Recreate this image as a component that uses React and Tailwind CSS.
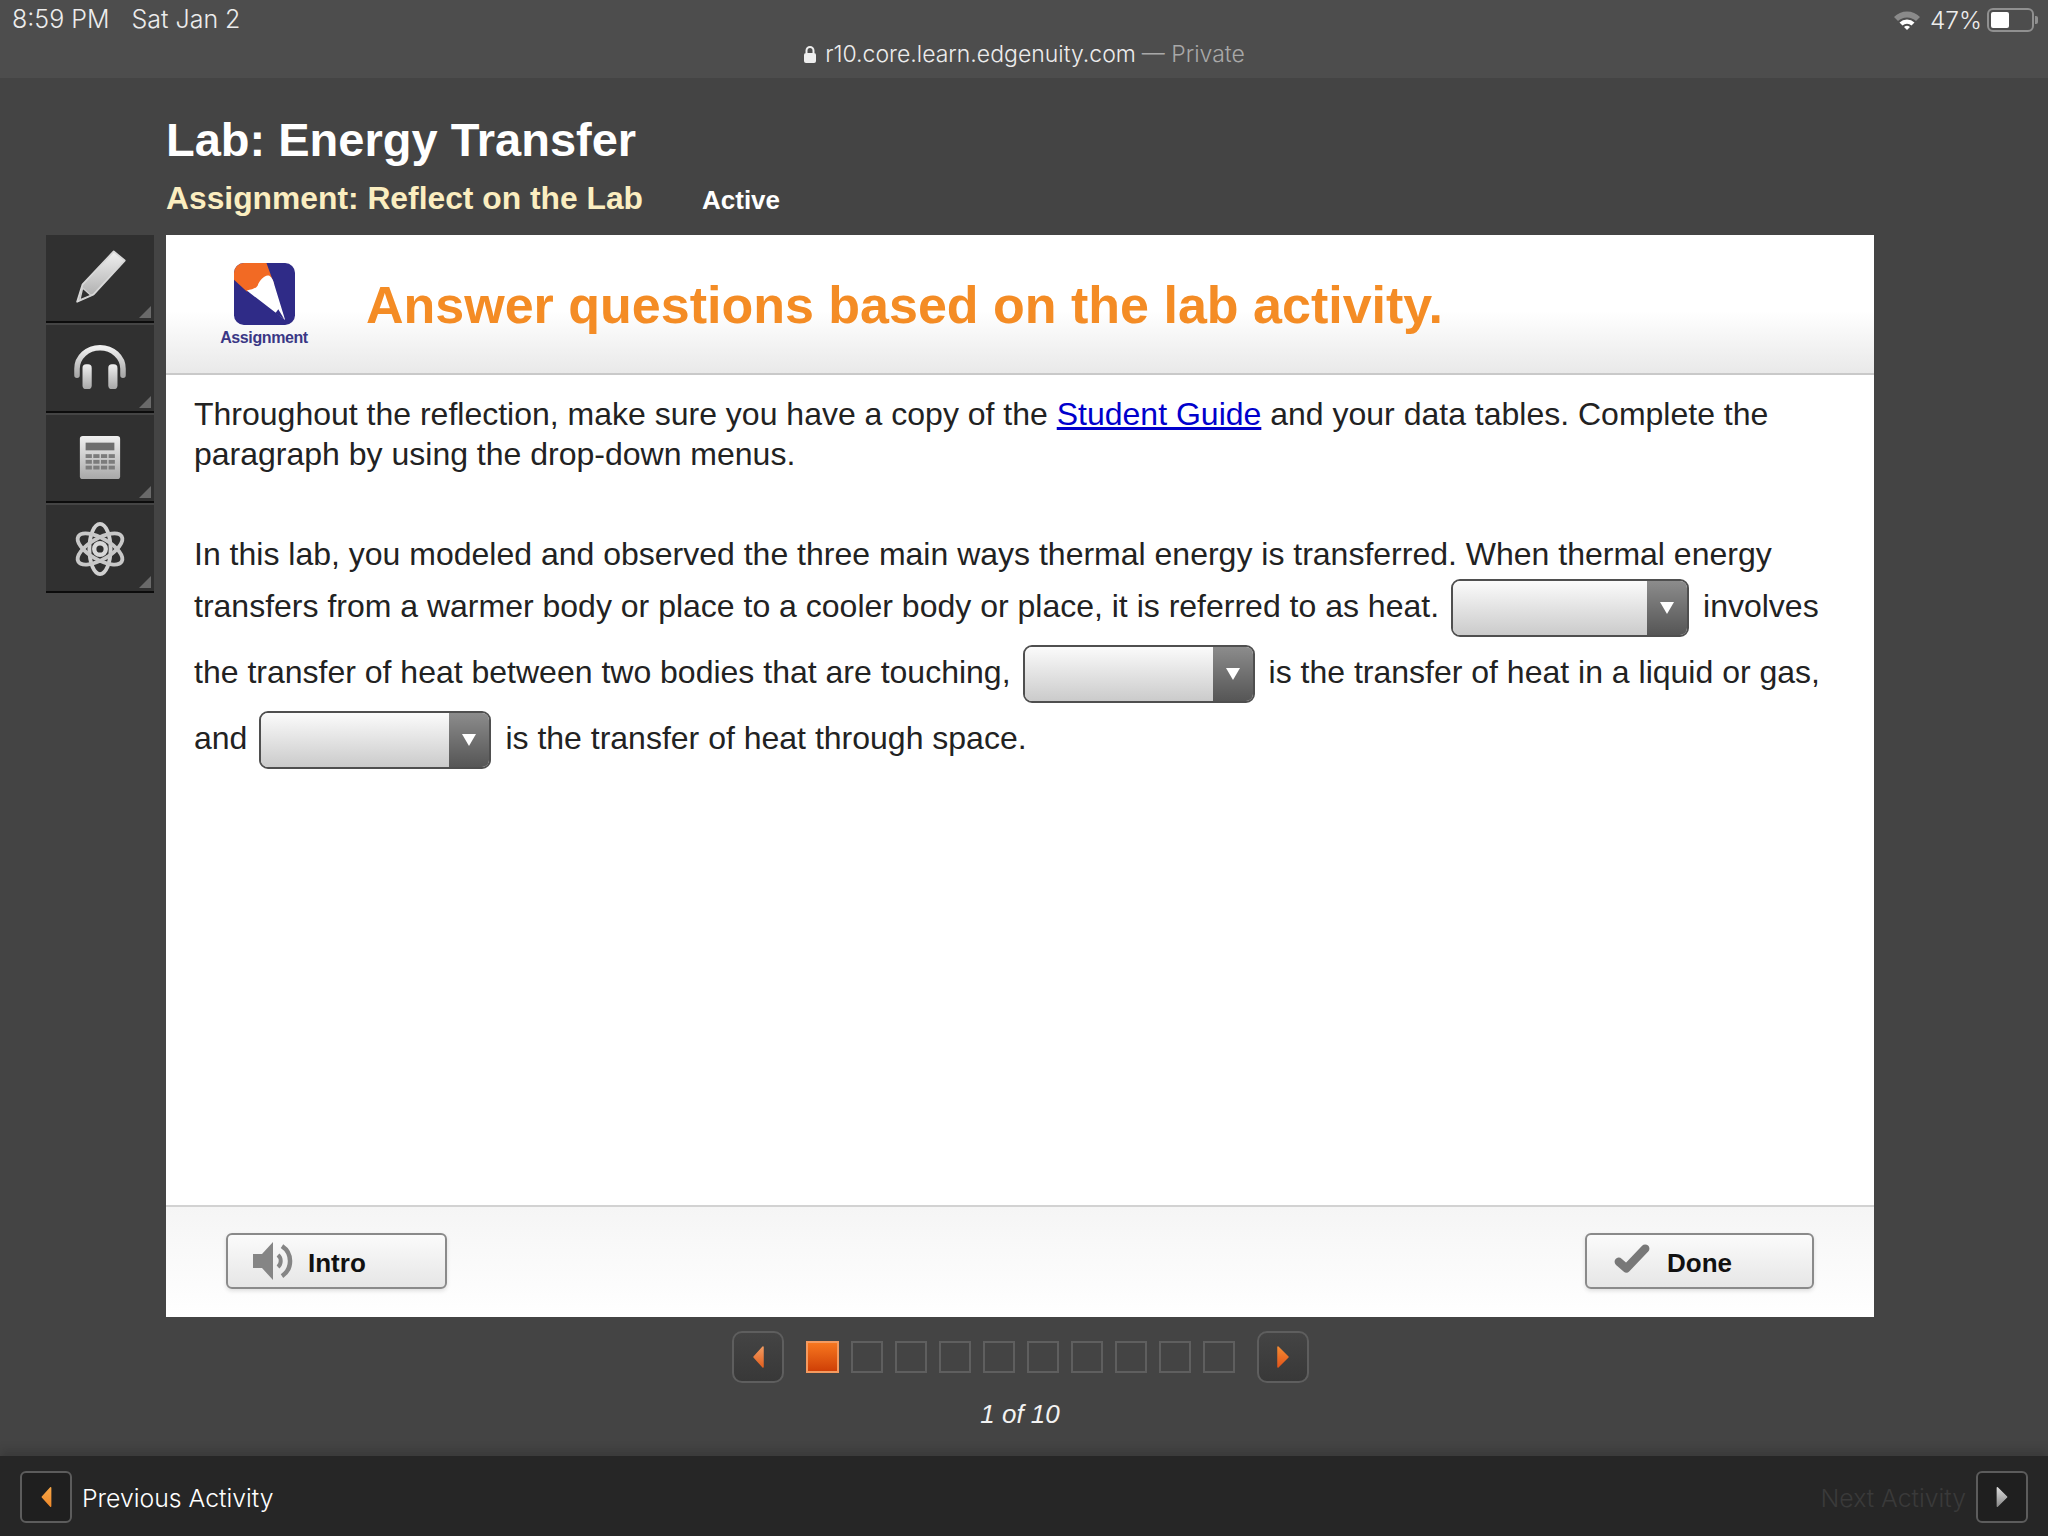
const grad = "bg-gradient-to-b from-[#fbfbfb] to-[#e6e6e6]";

function Tri({ dir = "left", id, from, to, size = 30 }) {
  const pts = dir === "left" ? "20,5 20,25 11,15" : "10,5 10,25 20,15";
  return (
    <svg width={size} height={size} viewBox="0 0 30 30">
      <defs>
        <linearGradient id={id} x1="0" y1="0" x2="0" y2="1">
          <stop offset="0" stopColor={from} />
          <stop offset="1" stopColor={to} />
        </linearGradient>
      </defs>
      <polygon points={pts} fill={`url(#${id})`} stroke={`url(#${id})`} strokeWidth="1.5" strokeLinejoin="round" />
    </svg>
  );
}

function IconGrad({ id }) {
  return (
    <defs>
      <linearGradient id={id} x1="0" y1="0" x2="0" y2="1">
        <stop offset="0" stopColor="#f0f0f0" />
        <stop offset="1" stopColor="#a8a8a8" />
      </linearGradient>
    </defs>
  );
}

function Tool({ children }) {
  return (
    <div className="relative h-[88px] mb-[2px] w-[108px] flex items-center justify-center bg-[#303030] border-b-[2px] border-b-[#0c0c0c] pb-[2px]">
      {children}
      <div className="absolute right-[3px] bottom-[3px] w-0 h-0 border-l-[12px] border-l-transparent border-b-[12px] border-b-[#6a6a6a]" />
    </div>
  );
}

function Select({ w }) {
  return (
    <span className={`inline-flex align-middle h-[58px] ${w} ml-[12px] mr-[14px] rounded-[9px] border-[2px] border-[#4f4f4f] overflow-hidden relative top-[-1px]`}>
      <span className="flex-1 bg-gradient-to-b from-[#fbfbfb] to-[#cbcbcb]" />
      <span className="w-[40px] flex items-center justify-center bg-gradient-to-b from-[#8c8c8c] to-[#565656]">
        <span className="w-0 h-0 border-l-[7px] border-r-[7px] border-t-[12px] border-l-transparent border-r-transparent border-t-white" />
      </span>
    </span>
  );
}

function Btn({ w, label, icon, gap }) {
  return (
    <div className={`${w} h-[56px] rounded-[6px] border-[2px] border-[#8a8a8a] ${grad} shadow-[0_2px_4px_rgba(0,0,0,0.12)] flex items-center pl-[22px]`}>
      <div className="w-[46px] flex items-center justify-center">{icon}</div>
      <span className={`${gap} mt-[5px] font-['Liberation_Sans',sans-serif] font-bold text-[26px] text-[#111]`}>{label}</span>
    </div>
  );
}

export default function App() {
  return (
    <div className="w-[2048px] h-[1536px] overflow-hidden flex flex-col bg-[#444444] font-['Liberation_Sans',sans-serif]">
      {/* status bar */}
      <div className="relative h-[78px] shrink-0 bg-[#4d4d4d] font-['Inter',sans-serif] text-[#ececec]">
        <div className="flex items-center justify-between h-[40px] pl-[12px] pr-[10px] text-[25px] font-light">
          <div className="flex gap-[22px]">
            <span>8:59 PM</span>
            <span>Sat Jan 2</span>
          </div>
          <div className="flex items-center">
            <svg width="28" height="22" viewBox="0 0 28 22" className="mr-[9px]">
              <path d="M1 8 A18 18 0 0 1 27 8 L23 12 A13 13 0 0 0 5 12 Z" fill="#8a8a8a" />
              <path d="M6.5 13.5 A11 11 0 0 1 21.5 13.5 L18.5 16.5 A7 7 0 0 0 9.5 16.5 Z" fill="#fff" />
              <path d="M11 18 A4.5 4.5 0 0 1 17 18 L14 21 Z" fill="#fff" />
            </svg>
            <span className="mr-[5px] text-[24.5px]">47%</span>
            <span className="w-[47px] h-[24px] rounded-[6px] border-[2px] border-[#909090] p-[2px] flex">
              <span className="w-[18px] h-full bg-white rounded-[2px]" />
            </span>
            <span className="w-[3px] h-[8px] ml-[1px] bg-[#909090] rounded-r-[2px]" />
          </div>
        </div>
        <div className="flex items-center justify-center h-[32px] text-[23px] font-light mt-[-2px]">
          <svg width="14" height="19" viewBox="0 0 14 19" className="mr-[8px]">
            <path d="M3.5 8 V5.5 a3.5 3.5 0 0 1 7 0 V8" fill="none" stroke="#eee" strokeWidth="2" />
            <rect x="1" y="8" width="12" height="10" rx="2" fill="#eee" />
          </svg>
          <span>r10.core.learn.edgenuity.com</span>
          <span className="text-[#a8a8a8] ml-[6px]">— Private</span>
        </div>
      </div>

      {/* headings */}
      <div className="pl-[166px] h-[157px] shrink-0">
        <h1 className="pt-[34px] text-[47px] leading-[56px] font-bold text-white">Lab: Energy Transfer</h1>
        <div className="flex items-baseline mt-[11px]">
          <span className="text-[31.8px] leading-[38px] font-bold text-[#fbeec0]">Assignment: Reflect on the Lab</span>
          <span className="ml-[59px] text-[26px] font-bold text-white">Active</span>
        </div>
      </div>

      {/* body */}
      <div className="flex pl-[46px] gap-[12px] items-start shrink-0">
        <div className="flex flex-col w-[108px]">
          <Tool>
            <svg width="64" height="64" viewBox="0 0 70 70">
              <IconGrad id="g1" />
              <path d="M50 7 L62 17 L28 54 L10 62 L16 43 Z" fill="url(#g1)" stroke="#d8d8d8" strokeWidth="2" strokeLinejoin="round" />
              <path d="M16 47 L25 55 L13 60 Z" fill="#303030" stroke="#d0d0d0" strokeWidth="1.5" />
            </svg>
          </Tool>
          <Tool>
            <svg width="60" height="46" viewBox="0 0 62 50">
              <IconGrad id="g2" />
              <path d="M6 34 V27 A25 23 0 0 1 56 27 V34" fill="none" stroke="url(#g2)" strokeWidth="6" strokeLinecap="round" />
              <rect x="12" y="22" width="10" height="27" rx="4" fill="url(#g2)" />
              <rect x="40" y="22" width="10" height="27" rx="4" fill="url(#g2)" />
            </svg>
          </Tool>
          <Tool>
            <svg width="44" height="46" viewBox="0 0 44 48" className="mt-[2px]">
              <IconGrad id="g3" />
              <rect x="1" y="1" width="42" height="45" rx="3" fill="url(#g3)" />
              <rect x="7" y="8" width="30" height="8" fill="#6e6e6e" />
              <g fill="#7c7c7c">
                <rect x="7" y="20" width="6.5" height="4" /><rect x="15" y="20" width="6.5" height="4" /><rect x="23" y="20" width="6.5" height="4" /><rect x="31" y="20" width="6.5" height="4" />
                <rect x="7" y="26" width="6.5" height="4" /><rect x="15" y="26" width="6.5" height="4" /><rect x="23" y="26" width="6.5" height="4" /><rect x="31" y="26" width="6.5" height="4" />
                <rect x="7" y="32" width="6.5" height="4" /><rect x="15" y="32" width="6.5" height="4" /><rect x="23" y="32" width="6.5" height="4" /><rect x="31" y="32" width="6.5" height="4" />
              </g>
            </svg>
          </Tool>
          <Tool>
            <svg width="54" height="58" viewBox="0 0 56 58" className="mt-[3px]">
              <g fill="none" strokeWidth="4">
                <ellipse cx="28" cy="29" rx="11" ry="26" stroke="#d0d0d0" />
                <ellipse cx="28" cy="29" rx="11" ry="26" transform="rotate(60 28 29)" stroke="#c8c8c8" />
                <ellipse cx="28" cy="29" rx="11" ry="26" transform="rotate(-60 28 29)" stroke="#c8c8c8" />
                <circle cx="28" cy="29" r="6" stroke="#d8d8d8" strokeWidth="4.5" />
              </g>
            </svg>
          </Tool>
        </div>

        <div className="w-[1708px] h-[1082px] bg-white flex flex-col">
          <div className="h-[140px] shrink-0 flex bg-gradient-to-b from-white from-[55%] to-[#e9e9e9] border-b-[2px] border-b-[#c9c9c9]">
            <div className="w-[196px] flex flex-col items-center pt-[28px]">
              <svg width="61" height="62" viewBox="0 0 62 63">
                <defs>
                  <clipPath id="lg"><rect x="0" y="0" width="62" height="63" rx="10" /></clipPath>
                </defs>
                <g clipPath="url(#lg)">
                  <rect width="62" height="63" fill="#2f2b87" />
                  <path d="M0 0 H33 L41 22 L28 24 L13 29 L0 17 Z" fill="#f26a24" />
                  <path d="M13 28 C18 27 22 26 24 23 C26 17 32 11 36 13 C39 15 40 18 41 22 L52 58 Z" fill="#fff" />
                  <path d="M45 47 L51 57 L42 51 Z" fill="#2f2b87" />
                </g>
              </svg>
              <span className="mt-[3px] text-[16px] leading-[20px] font-bold tracking-[-0.4px] text-[#3a3785]">Assignment</span>
            </div>
            <div className="ml-[4px] pt-[40px] text-[52px] leading-[60px] font-bold text-[#f48c25]">Answer questions based on the lab activity.</div>
          </div>

          <div className="flex-1 pl-[28px] text-[32px] text-[#222]">
            <p className="pt-[19px] leading-[40px]">
              Throughout the reflection, make sure you have a copy of the{" "}
              <span className="text-[#0000cc] underline">Student Guide</span> and your data tables. Complete the<br />
              paragraph by using the drop-down menus.
            </p>
            <div className="mt-[60px]">
              <div className="h-[40px] leading-[40px] whitespace-nowrap">In this lab, you modeled and observed the three main ways thermal energy is transferred. When thermal energy</div>
              <div className="h-[66px] leading-[66px] mt-[-1px] whitespace-nowrap">transfers from a warmer body or place to a cooler body or place, it is referred to as heat.<Select w="w-[238px]" />involves</div>
              <div className="h-[66px] leading-[66px] whitespace-nowrap">the transfer of heat between two bodies that are touching,<Select w="w-[232px]" />is the transfer of heat in a liquid or gas,</div>
              <div className="h-[66px] leading-[66px] whitespace-nowrap">and<Select w="w-[232px]" />is the transfer of heat through space.</div>
            </div>
          </div>

          <div className="h-[112px] shrink-0 border-t-[2px] border-t-[#d2d2d2] bg-gradient-to-b from-[#f5f5f5] to-white flex items-start justify-between px-[60px] pt-[26px]">
            <Btn
              w="w-[221px]"
              label="Intro"
              gap="ml-[12px]"
              icon={
                <svg width="44" height="44" viewBox="0 0 44 44">
                  <path d="M2 15 H11 L22 3 V41 L11 29 H2 Z" fill="#858585" />
                  <path d="M27 16 A8 8 0 0 1 27 28" fill="none" stroke="#858585" strokeWidth="4" />
                  <path d="M31 7 A18 18 0 0 1 31 37" fill="none" stroke="#858585" strokeWidth="4.5" />
                </svg>
              }
            />
            <Btn
              w="w-[229px]"
              label="Done"
              gap="ml-[12px]"
              icon={
                <svg width="38" height="32" viewBox="0 0 40 34" className="mb-[4px]">
                  <path d="M6 20 L14 27 L34 6" fill="none" stroke="#787878" strokeWidth="9" strokeLinejoin="round" strokeLinecap="round" />
                </svg>
              }
            />
          </div>
        </div>
      </div>

      {/* pager */}
      <div className="flex flex-col items-center shrink-0 pr-[8px]">
        <div className="flex items-center mt-[14px]">
          <div className="w-[52px] h-[52px] rounded-[10px] border-[2px] border-[#5e5e5e] bg-gradient-to-b from-[#444] to-[#383838] flex items-center justify-center">
            <Tri dir="left" id="p1" from="#f29a60" to="#e2601f" />
          </div>
          <div className="flex gap-[12px] mx-[22px]">
            <div className="w-[33px] h-[32px] border-[2px] border-[#f59a5f] bg-gradient-to-b from-[#f7761e] to-[#cf3f06]" />
            {[0, 1, 2, 3, 4, 5, 6, 7, 8].map((i) => (
              <div key={i} className="w-[32px] h-[32px] border-[2px] border-[#5f5f5f]" />
            ))}
          </div>
          <div className="w-[52px] h-[52px] rounded-[10px] border-[2px] border-[#5e5e5e] bg-gradient-to-b from-[#444] to-[#383838] flex items-center justify-center">
            <Tri dir="right" id="p2" from="#f58a32" to="#e2551a" />
          </div>
        </div>
        <div className="mt-[16px] text-[26px] leading-[30px] italic text-[#f2f2f2]">1 of 10</div>
      </div>

      {/* bottom bar */}
      <div className="mt-auto h-[80px] shrink-0 bg-[#262626] shadow-[0_-6px_8px_rgba(30,30,30,0.25)] flex items-center justify-between pl-[20px] pr-[20px] pt-[2px] font-['Inter',sans-serif] text-[24.8px]">
        <div className="flex items-center">
          <div className="w-[52px] h-[52px] rounded-[6px] border-[2px] border-[#5c5c5c] bg-[#1f1f1f] flex items-center justify-center">
            <Tri dir="left" id="p3" from="#f7a647" to="#f08a2a" size={28} />
          </div>
          <span className="ml-[10px] mt-[4px] font-light text-white">Previous Activity</span>
        </div>
        <div className="flex items-center">
          <span className="mr-[10px] mt-[4px] font-light text-[#3a3a3a]">Next Activity</span>
          <div className="w-[52px] h-[52px] rounded-[6px] border-[2px] border-[#5c5c5c] bg-[#1f1f1f] flex items-center justify-center">
            <Tri dir="right" id="p4" from="#dcdcdc" to="#8a8a8a" size={28} />
          </div>
        </div>
      </div>
    </div>
  );
}
